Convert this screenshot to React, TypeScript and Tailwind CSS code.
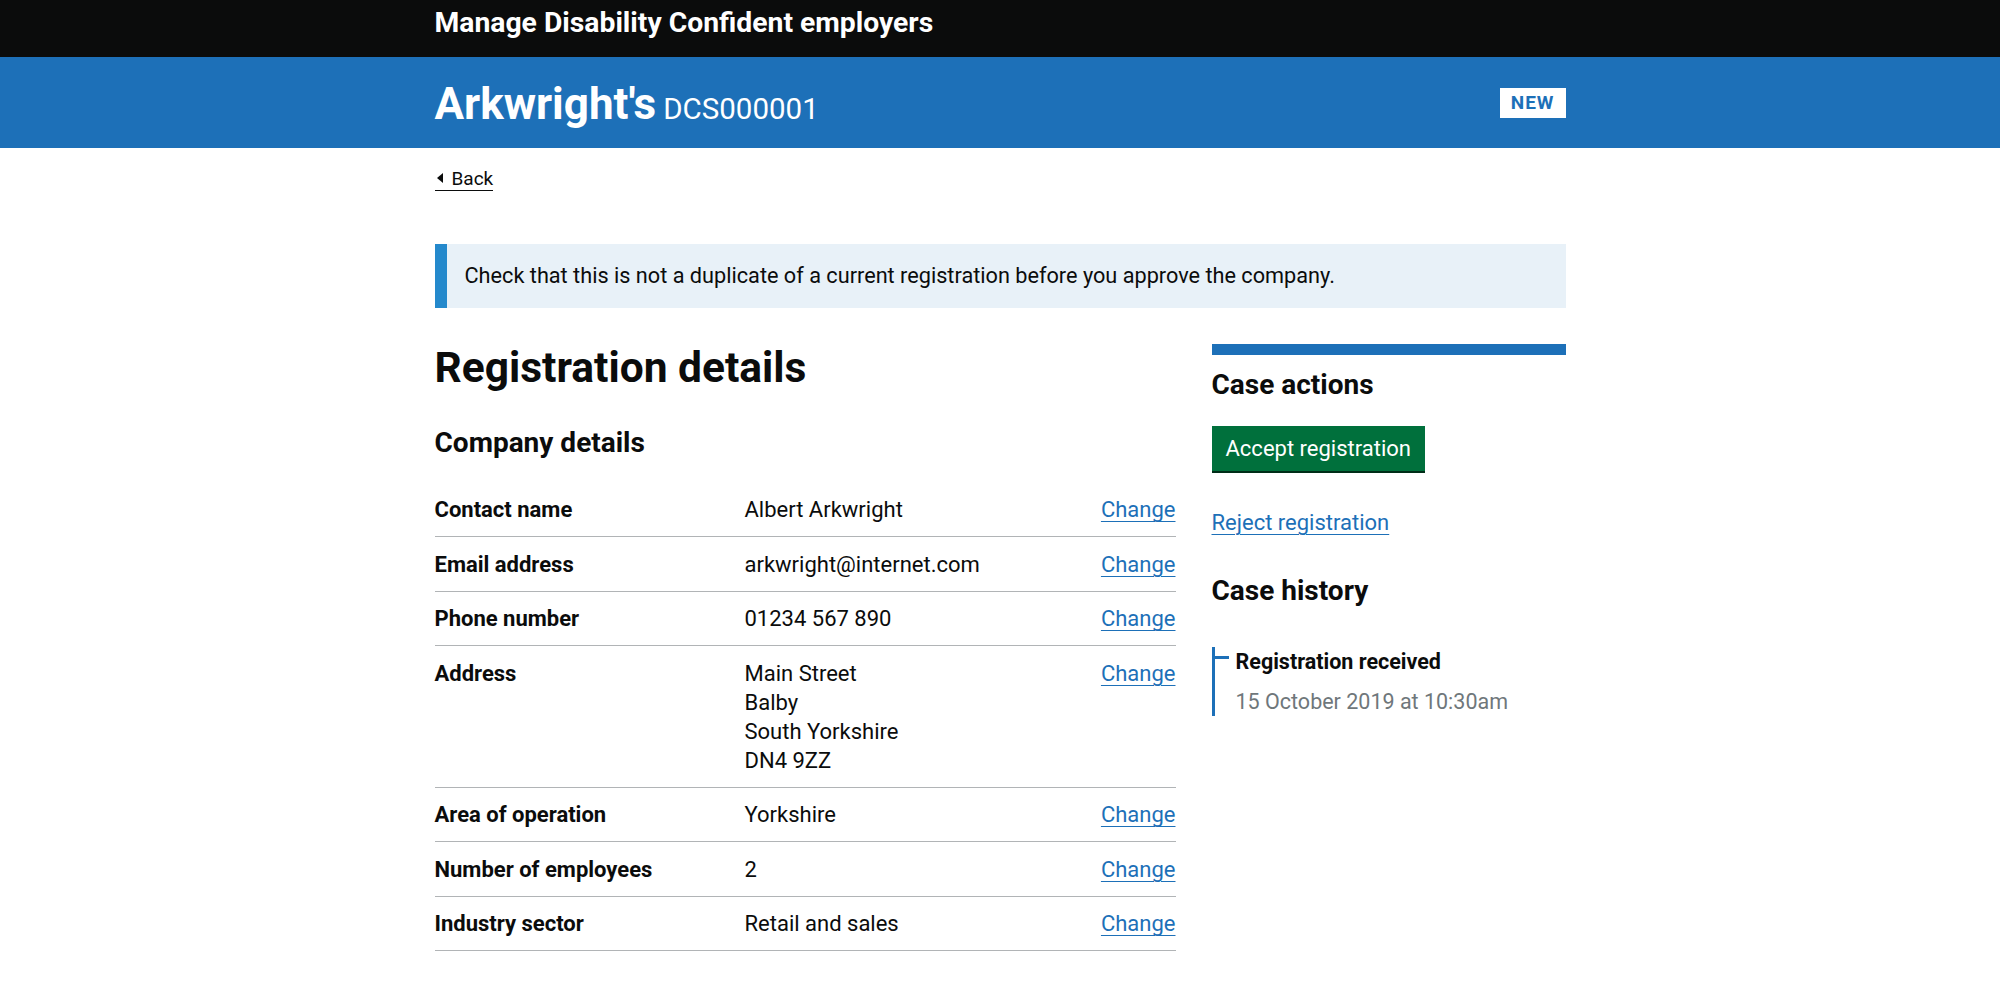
import React from 'react';

const rows: { key: string; value: string[] }[] = [
  { key: 'Contact name', value: ['Albert Arkwright'] },
  { key: 'Email address', value: ['arkwright@internet.com'] },
  { key: 'Phone number', value: ['01234 567 890'] },
  { key: 'Address', value: ['Main Street', 'Balby', 'South Yorkshire', 'DN4 9ZZ'] },
  { key: 'Area of operation', value: ['Yorkshire'] },
  { key: 'Number of employees', value: ['2'] },
  { key: 'Industry sector', value: ['Retail and sales'] },
];

export default function App() {
  return (
    <div className="min-h-screen bg-white text-[#0b0c0c]" style={{ fontFamily: 'Roboto, "Noto Sans", Arial, sans-serif' }}>
      <header className="bg-[#0b0c0c] h-[57px]">
        <div className="mx-auto w-[1131px] pt-[6px]">
          <span className="text-white font-bold text-[28.3px] leading-[34px]">Manage Disability Confident employers</span>
        </div>
      </header>

      <div className="bg-[#1d70b8] h-[91px]">
        <div className="mx-auto w-[1131px] h-full flex items-center justify-between">
          <h1 className="text-white flex items-baseline gap-[7px] pt-[2px]">
            <span className="font-bold text-[44px] leading-[48px]">Arkwright's</span>
            <span className="text-[29.5px] leading-[34px]">DCS000001</span>
          </h1>
          <span className="bg-white text-[#1d70b8] font-bold text-[19px] leading-[20px] tracking-[1px] px-[11px] pt-[5px] pb-[5px]">
            NEW
          </span>
        </div>
      </div>

      <main className="mx-auto w-[1131px]">
        <div className="pt-[18px]">
          <a href="#" className="inline-flex items-center gap-[9px] border-b border-[#0b0c0c] text-[19px] leading-[23px] pl-[2px]">
            <span className="w-0 h-0 border-y-[5px] border-y-transparent border-r-[6px] border-r-[#0b0c0c]" />
            <span>Back</span>
          </a>
        </div>

        <div className="mt-[53px] flex bg-[#e8f1f8] h-[64px]">
          <div className="w-[12px] bg-[#2489cc]" />
          <p className="pl-[18px] flex items-center text-[21.7px] leading-[29.5px]">
            Check that this is not a duplicate of a current registration before you approve the company.
          </p>
        </div>

        <div className="mt-[36px] grid grid-cols-[741px_354px] gap-x-[36px] pb-[40px]">
          <section>
            <h1 className="font-bold text-[42.5px] leading-[47px]">Registration details</h1>
            <h2 className="mt-[34px] font-bold text-[28px] leading-[35px]">Company details</h2>
            <dl className="mt-[23px] text-[22px] leading-[29px]">
              {rows.map((r) => (
                <div key={r.key} className="grid grid-cols-[310px_1fr_auto] border-b border-[#b1b4b6] pt-[12.5px] pb-[12px]">
                  <dt className="font-bold">{r.key}</dt>
                  <dd>
                    {r.value.map((v) => (
                      <div key={v}>{v}</div>
                    ))}
                  </dd>
                  <dd>
                    <a href="#" className="text-[#1d70b8] underline underline-offset-[4px] decoration-1">Change</a>
                  </dd>
                </div>
              ))}
            </dl>
          </section>

          <aside>
            <div className="border-t-[11px] border-[#1d70b8] pt-[12px]">
              <h2 className="font-bold text-[28px] leading-[35px]">Case actions</h2>
            </div>
            <button className="mt-[24px] bg-[#00703c] text-white text-[22px] leading-[23px] px-[14px] pt-[11px] pb-[11px] shadow-[0_2px_0_#002d18]">
              Accept registration
            </button>
            <div className="mt-[37px] text-[22px] leading-[29.5px]">
              <a href="#" className="text-[#1d70b8] underline underline-offset-[4px] decoration-1">Reject registration</a>
            </div>
            <h2 className="mt-[36px] font-bold text-[28px] leading-[35px]">Case history</h2>
            <div className="mt-[39px] relative pl-[21px] text-[21.5px] leading-[29.5px] border-l-[3px] border-[#1d70b8]">
              <span className="absolute left-0 top-[9px] w-[14px] h-[3px] bg-[#1d70b8]" />
              <div className="font-bold">Registration received</div>
              <div className="mt-[10px] text-[#6f777b]">15 October 2019 at 10:30am</div>
            </div>
          </aside>
        </div>
      </main>
    </div>
  );
}
